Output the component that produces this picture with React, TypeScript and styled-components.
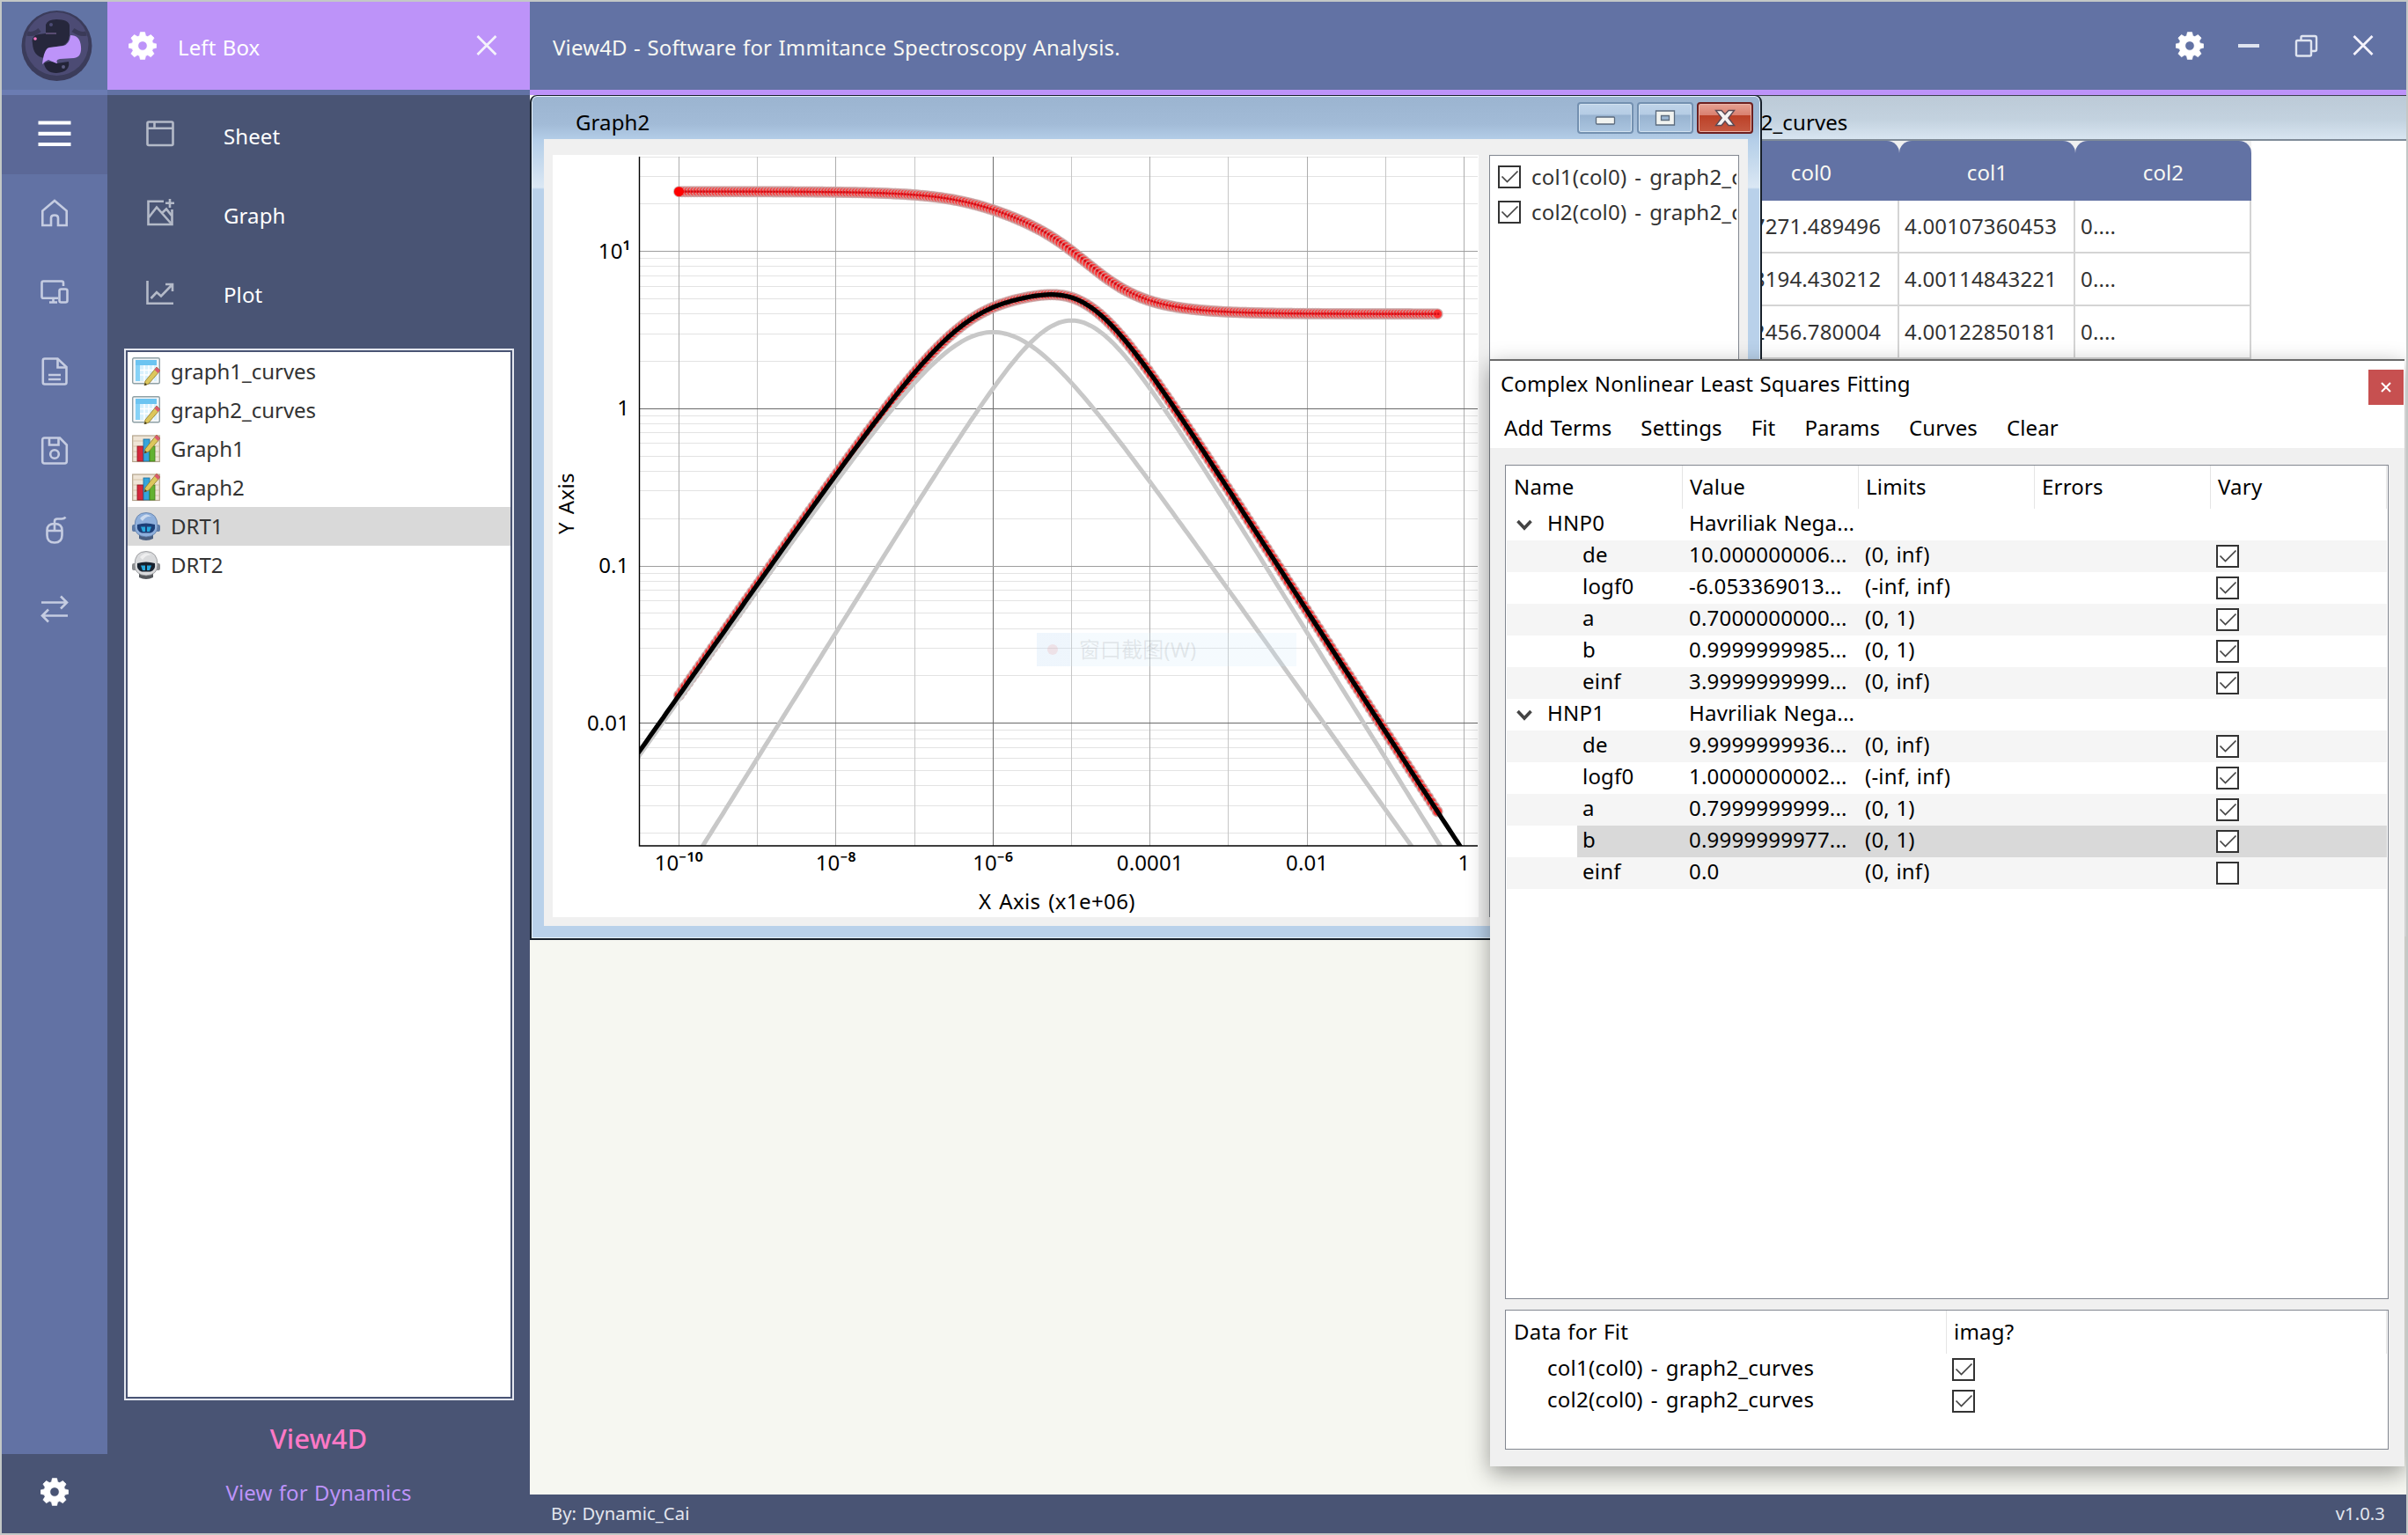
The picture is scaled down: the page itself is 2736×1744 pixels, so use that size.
import React from 'react';
import styled, { createGlobalStyle, css } from 'styled-components';

const font = `"Noto Sans", "Noto Sans CJK SC", "Open Sans", sans-serif`;

const Global = createGlobalStyle`
  * { box-sizing: border-box; }
  body { margin: 0; background: #495474; font-family: ${font}; font-size: 24px; line-height: 32px; letter-spacing: 0.1px; word-spacing: 1px; color: #000; }
  svg { display: block; flex: none; }
`;

/* ---------- shell ---------- */

const Shell = styled.div`
  width: 2736px;
  height: 1744px;
  display: flex;
  overflow: hidden;
  border: 2px solid #c3c8c6;
  white-space: nowrap;
`;

const Rail = styled.nav`
  width: 120px;
  flex: none;
  display: flex;
  flex-direction: column;
  background: #6272a4;
`;

const LogoCell = styled.div`
  height: 106px;
  display: flex;
  padding: 10px 0 0 22px;
  background: #6274a5;
  border-bottom: 6px solid #6b7cb2;
`;

const RailButton = styled.div<{ $active?: boolean }>`
  height: 90px;
  display: flex;
  align-items: center;
  justify-content: center;
  padding-bottom: 2px;
  color: #c5cce1;
  background: ${(p) => (p.$active ? '#5b6897' : 'transparent')};
`;

const RailFooter = styled.div`
  margin-top: auto;
  height: 90px;
  display: flex;
  align-items: center;
  justify-content: center;
  padding-bottom: 4px;
  color: #fff;
  background: #495474;
`;

const LeftBox = styled.aside`
  width: 480px;
  flex: none;
  display: flex;
  flex-direction: column;
  background: #495474;
`;

const LeftHeader = styled.div`
  height: 106px;
  display: flex;
  align-items: center;
  padding: 0 37px 0 24px;
  background: #bd93f9;
  border-bottom: 6px solid #6272a4;
  color: #fff;
`;

const LeftTitle = styled.span`
  flex: 1;
  padding: 3px 0 0 24px;
`;

const LeftItem = styled.div`
  height: 90px;
  display: flex;
  align-items: center;
  padding: 0 0 3px 44px;
  gap: 56px;
  color: #b4bac8;
`;

const LeftItemLabel = styled.span`
  padding-top: 6px;
  color: #fff;
`;

const ListFrame = styled.div`
  margin: 18px 18px 0 19px;
  height: 1195px;
  border: 2px solid #e4e7ef;
  padding: 2px;
`;

const List = styled.div`
  height: 100%;
  background: #fff;
`;

const ListRow = styled.div<{ $selected?: boolean }>`
  height: 44px;
  display: flex;
  align-items: center;
  gap: 12px;
  padding-left: 5px;
  letter-spacing: 0;
  color: #333;
  background: ${(p) => (p.$selected ? '#d9d9d9' : 'transparent')};
`;

const Brand = styled.div`
  margin-top: 23px;
  text-align: center;
  font-size: 31px;
  line-height: 40px;
  font-weight: 500;
  color: #ff79c6;
`;

const Tagline = styled.div`
  margin-top: 26px;
  text-align: center;
  color: #bd93f9;
`;

const Main = styled.main`
  flex: 1;
  min-width: 0;
  display: flex;
  flex-direction: column;
`;

const TopBar = styled.header`
  height: 106px;
  flex: none;
  display: flex;
  align-items: center;
  padding: 0 37px 0 26px;
  background: #6272a4;
  border-bottom: 6px solid #bd93f9;
  color: #f8f8f2;
`;

const AppTitle = styled.span`
  flex: 1;
  padding-top: 3px;
  letter-spacing: 0.16px;
`;

const TopButtons = styled.div`
  display: flex;
  align-items: center;
  gap: 37px;
  color: #dfe4f0;
`;

const Footer = styled.footer`
  height: 44px;
  flex: none;
  display: flex;
  align-items: center;
  justify-content: space-between;
  padding: 0 24px 3px 24px;
  font-size: 20.2px;
  background: #495474;
  color: #e3e6ee;
`;

/* ---------- MDI area ---------- */

const Workspace = styled.section`
  position: relative;
  flex: 1;
  overflow: hidden;
  background: #f6f7f1;
`;

const SheetWindow = styled.div`
  position: absolute;
  left: 1130px;
  top: 0;
  width: 1020px;
  height: 956px;
  background: #fff;
  border-top: 1px solid #3b3f4c;
  padding-left: 226px;
`;

const SheetTitle = styled.div`
  height: 51px;
  margin-left: -226px;
  padding: 14px 0 0 201px;
  border-bottom: 2px solid #7f8b98;
  background: linear-gradient(#bccad7, #c3d2df 55%, #d8e5f1);
`;

const SheetHead = styled.div`
  display: flex;
  width: 600px;
  background: #f0f0f0;
`;

const SheetHeadCell = styled.div`
  width: 200px;
  flex: none;
  height: 68px;
  padding-top: 20px;
  text-align: center;
  color: #f8f8f2;
  background: #6272a4;
  border-radius: 14px 14px 0 0;
`;

const SheetRow = styled.div`
  display: flex;
`;

const SheetCell = styled.div`
  width: 200px;
  flex: none;
  height: 60px;
  padding: 13px 0 0 6px;
  letter-spacing: 0.15px;
  color: #333;
  border-right: 2px solid #d4d4d4;
  border-bottom: 2px solid #d4d4d4;
`;

const GraphWindow = styled.div`
  position: absolute;
  left: 0;
  top: 0;
  width: 1400px;
  height: 960px;
  border: 2px solid #17202b;
  border-top-width: 1px;
  border-radius: 8px 8px 0 0;
  box-shadow: inset 0 0 0 1px #e6f2fb;
  background: linear-gradient(#9bb4d0 0, #a2bbd7 32px, #b4cee8 50px, #c9dcee 80px, #dbe8f4 104px, #b9d1ea 106px);
  padding: 0 14px 14px;
  display: flex;
  flex-direction: column;
`;

const GraphTitle = styled.div`
  height: 49px;
  flex: none;
  display: flex;
  padding: 7px 0 0 36px;
  margin-right: -6px;
`;

const GraphName = styled.span`
  flex: 1;
  padding-top: 7px;
`;

const FrameButtons = styled.div`
  display: flex;
  gap: 4px;
`;

const FrameButton = styled.div<{ $close?: boolean }>`
  width: 64px;
  height: 36px;
  border: 2px solid ${(p) => (p.$close ? '#6d1f1f' : '#7390b0')};
  border-radius: 4px;
  box-shadow: inset 0 0 0 1px ${(p) => (p.$close ? '#eab5a9' : '#d3e2f0')};
  display: flex;
  align-items: center;
  justify-content: center;
  background: ${(p) =>
    p.$close
      ? 'linear-gradient(#e6a193 0, #d98070 40%, #bb4027 41%, #c65a42 100%)'
      : 'linear-gradient(#c0d4e9 0, #b5cce4 38%, #98b3d0 40%, #abc5e0 100%)'};
`;

const GraphBody = styled.div`
  flex: 1;
  display: flex;
  gap: 12px;
  padding: 18px 10px 10px;
  background: #f0f0f0;
`;

const PlotArea = styled.div`
  position: relative;
  width: 1052px;
  height: 866px;
  flex: none;
  background: #fff;
`;

const Ghost = styled.div`
  position: absolute;
  left: 550px;
  top: 543px;
  width: 295px;
  height: 38px;
  display: flex;
  align-items: center;
  gap: 24px;
  padding-left: 12px;
  color: rgba(120, 125, 130, 0.17);
  background: linear-gradient(90deg, rgba(190, 218, 245, 0.25) 38px, rgba(205, 232, 250, 0.2) 38px);
`;

const GhostDot = styled.i`
  width: 12px;
  height: 12px;
  border-radius: 50%;
  background: rgba(235, 150, 150, 0.2);
`;

const Legend = styled.div`
  flex: 1;
  min-width: 0;
  border: 1px solid #828790;
  background: #fff;
  padding: 4px 2px 0 9px;
`;

const LegendRow = styled.div`
  height: 40px;
  display: flex;
  align-items: center;
  gap: 12px;
  overflow: hidden;
  color: #333;
  letter-spacing: 0.2px;
  word-spacing: 2.5px;
`;

/* ---------- fit dialog ---------- */

const Dialog = styled.div`
  position: absolute;
  left: 1091px;
  top: 300px;
  width: 1039px;
  height: 1258px;
  border-top: 2px solid #6b6b6b;
  background: #f0f0f0;
  box-shadow: 0 8px 24px rgba(0, 0, 0, 0.38);
  display: flex;
  flex-direction: column;
`;

const DialogTitle = styled.div`
  height: 55px;
  flex: none;
  display: flex;
  justify-content: space-between;
  align-items: flex-start;
  padding: 10px 1px 0 12px;
  background: #fff;
`;

const DialogClose = styled.div`
  width: 40px;
  height: 40px;
  display: flex;
  align-items: center;
  justify-content: center;
  background: #c75050;
`;

const Menu = styled.div`
  height: 44px;
  flex: none;
  display: flex;
  gap: 33px;
  padding: 5px 0 0 16px;
  letter-spacing: 0.13px;
  background: #fff;
`;

const Tree = styled.div<{ $h: number }>`
  margin: 19px 18px 0 17px;
  height: ${(p) => p.$h}px;
  flex: none;
  border: 1px solid #828790;
  background: #fff;
  padding: 0 1px;
  letter-spacing: 0.2px;
  & + & { margin-top: 12px; }
`;

const TreeHead = styled.div`
  height: 49px;
  display: flex;
`;

const HeadCell = styled.div<{ $w: number }>`
  width: ${(p) => p.$w}px;
  flex: none;
  padding: 8px 0 0 8px;
  border-right: 1px solid #e5e5e5;
`;

const rowTone = { plain: '#fff', alt: '#f5f5f5', selected: '#d9d9d9' };

const TreeRow = styled.div<{ $tone: keyof typeof rowTone }>`
  height: 36px;
  display: flex;
  background: ${(p) => rowTone[p.$tone]};
`;

const Cell = styled.div<{ $w: number; $indent?: number; $mask?: boolean; $wide?: boolean }>`
  width: ${(p) => p.$w}px;
  flex: none;
  display: flex;
  align-items: center;
  padding: 0 0 4px ${(p) => p.$indent ?? 7}px;
  ${(p) => p.$mask && css`background: linear-gradient(90deg, #fff 80px, transparent 80px);`}
  ${(p) => p.$wide && css`letter-spacing: 0.25px; word-spacing: 2.5px;`}
`;

const Chevron = styled.span`
  width: 39px;
  padding: 5px 0 0 3px;
`;

const Box = styled.span<{ $drop?: number }>`
  width: 26px;
  height: 26px;
  flex: none;
  border: 2px solid #333;
  background: #fff;
  margin-top: ${(p) => p.$drop ?? 0}px;
`;

const CheckBox = ({ checked = true, drop }: { checked?: boolean; drop?: number }) => (
  <Box $drop={drop}>
    {checked && (
      <svg width="22" height="22" viewBox="0 0 22 22" fill="none" stroke="#444" strokeWidth="1.7">
        <path d="M2.5 10.5 L8.5 16.5 L20.5 4.5" />
      </svg>
    )}
  </Box>
);

/* ---------- icons ---------- */

const Line = ({ size = 32, sw = 2.6, children }: { size?: number; sw?: number; children: React.ReactNode }) => (
  <svg width={size} height={size} viewBox="0 0 32 32" fill="none" stroke="currentColor" strokeWidth={sw}>
    {children}
  </svg>
);

const Gear = () => (
  <svg width="32" height="32" viewBox="0 0 32 32" fill="#fff">
    <path
      fillRule="evenodd"
      d="M13.4 0.6h5.2l1 4.1 2.2 0.9 3.6-2.2 3.7 3.7-2.2 3.6 0.9 2.2 4 1v4.4l-4 1-0.9 2.2 2.2 3.6-3.7 3.7-3.6-2.2-2.2 0.9-1 4.1h-5.2l-1-4.1-2.2-0.9-3.6 2.2-3.7-3.7 2.2-3.6-0.9-2.2-4-1v-4.4l4-1 0.9-2.2-2.2-3.6 3.7-3.7 3.6 2.2 2.2-0.9zM16 10.8a5.2 5.2 0 1 0 0 10.4 5.2 5.2 0 0 0 0-10.4z"
      stroke="#fff"
      strokeWidth="0.6"
      strokeLinejoin="round"
    />
  </svg>
);

const Cross = () => (
  <svg width="24" height="24" viewBox="0 0 24 24" fill="none" stroke="#f4f2fb" strokeWidth="2.8">
    <path d="M1.5 1 L22.5 22 M22.5 1 L1.5 22" />
  </svg>
);

const Logo = () => (
  <svg width="82" height="82" viewBox="0 0 82 82">
    <circle cx="40.500" cy="40" r="40" fill="#3b3c5b" />
    <circle cx="40.500" cy="38" r="36" fill="#4c4b74" />
    <path d="M7 26 Q14 28 21 22 M59 22 Q67 28 74 26" stroke="#3a3a58" strokeWidth="5" fill="none" />
    <path d="M28 16 Q30 10 40 10 Q54 10 55 17 L55 28 Q54 38 46 40 L34 42 Q27 44 26 54 Q14 52 13 38 Q11 28 20 27 L28 26 Z" fill="#26273c" />
    <path d="M56 28 Q67 28 68 41 Q69 53 60 54 L44 55 Q38 56 42 61 L31 56 Q26 58 24 61 Q26 43 32 42 L48 40 Q55 38 56 28 Z" fill="#bd93f9" />
    <path d="M26 60 Q32 56 40 60 L54 58 Q56 70 40 71 Q28 71 26 60 Z" fill="#232438" />
    <circle cx="16" cy="32" r="1.800" fill="#ff79c6" />
    <circle cx="34" cy="16" r="2" fill="#4c4b74" />
    <path d="M28 26 H40" stroke="#6b5a85" strokeWidth="1.500" />
    <circle cx="48" cy="64" r="2" fill="#5c5c80" />
  </svg>
);

const Hamburger = () => (
  <svg width="38" height="32" viewBox="0 0 38 32" stroke="#fff" strokeWidth="4.2">
    <path d="M0.500 3.500 H37.500 M0.500 15.800 H37.500 M0.500 28 H37.500" />
  </svg>
);

const railIcons = [
  <path key="home" d="M2.300 30 V13.500 L16 2 L29.700 13.500 V30 H20 V21.500 Q20 18.500 16 18.500 Q12 18.500 12 21.500 V30 Z" />,
  <g key="devices">
    <path d="M26 9 V5.500 Q26 3.500 24 3.500 H3.300 Q1.500 3.500 1.500 5.500 V21 Q1.500 22.800 3.300 22.800 H20" />
    <path d="M10 27.500 H19 M14.500 23 V27" />
    <rect x="21.500" y="12.500" width="9" height="15" rx="2" />
  </g>,
  <g key="file">
    <path d="M2.800 3.500 Q2.800 1.500 4.800 1.500 H19.500 L29.500 11 V28.500 Q29.500 30.500 27.500 30.500 H4.800 Q2.800 30.500 2.800 28.500 Z" />
    <path d="M19.500 2 V11.500 H29 M9 20 H23 M9 25 H23" />
  </g>,
  <g key="save">
    <path d="M2.200 4 Q2.200 1.500 4.500 1.500 H22 L29.800 9.500 V28 Q29.800 30.500 27.500 30.500 H4.500 Q2.200 30.500 2.200 28 Z" />
    <path d="M10 2 V9.500 H20.500 V2" />
    <circle cx="16" cy="20" r="4.800" />
  </g>,
  <g key="mouse">
    <path d="M16 9 V6.500 Q16 3.500 19 3.500 H24 Q27 3.500 28.500 1.500 M7.500 16.500 Q7.500 9 16 9 Q24.500 9 24.500 16.500 V22 Q24.500 30.500 16 30.500 Q7.500 30.500 7.500 22 Z M7.500 17 H24.500 M16 9 V17" />
  </g>,
  <g key="arrows">
    <path d="M1 8.500 H30 M23 1.500 L30 8.500 L23 15.500 M31 23.500 H2 M9 16.500 L2 23.500 L9 30.500" />
  </g>,
];

const leftItems = [
  {
    label: 'Sheet',
    icon: (
      <g>
        <rect x="1.500" y="2.500" width="29" height="26.500" rx="1.500" />
        <path d="M1.500 9.800 H30.500 M9.500 2.500 V9.800" />
      </g>
    ),
  },
  {
    label: 'Graph',
    icon: (
      <g>
        <path d="M20 2.800 H2.500 V29 H29.500 V12 M27 0 V10 M22 4.800 H32" />
        <path d="M3 21 L12 9.500 L28.500 28 M18 16 L23 11.500 L29 19" />
      </g>
    ),
  },
  {
    label: 'Plot',
    icon: (
      <g>
        <path d="M1.500 3 V28.700 H31" />
        <path d="M5.500 23 L12 16 L17 20.500 L29.500 7.500 M22 7 H30 V15" />
      </g>
    ),
  },
];

const Pencil = ({ dx = 0, dy = 0 }: { dx?: number; dy?: number }) => (
  <g transform={`translate(${dx} ${dy})`}>
    <path d="M28 0 L32 4 L19 19 L14 21 L15 16 Z" fill="#dcc75c" stroke="#8f7a2c" strokeWidth="0.800" />
    <path d="M28 0 L32 4 L29.500 7 L25.500 3 Z" fill="#d85a70" />
    <path d="M15 18 L14 21 L17 20 Z" fill="#3a3320" />
  </g>
);

const TableIcon = () => (
  <svg width="32" height="32" viewBox="0 0 32 32">
    <rect x="0.700" y="0.700" width="30.600" height="29" rx="1.500" fill="#f3f6f8" stroke="#8fa0a5" strokeWidth="1.400" />
    <rect x="4" y="3" width="24" height="24" fill="#d9f1fd" />
    <rect x="4" y="3" width="24" height="6" fill="#6cc4f1" />
    <rect x="4" y="9" width="5" height="18" fill="#86d2f7" />
    <path d="M9 14.500 H28 M9 20 H28 M14 9 V27 M19 9 V27 M24 9 V27" stroke="#fff" strokeWidth="1.500" />
    <Pencil dy={11} />
  </svg>
);

const ChartIcon = () => (
  <svg width="32" height="32" viewBox="0 0 32 32">
    <rect x="0.700" y="1" width="30.600" height="29.500" fill="#efe5d6" stroke="#b3a48c" strokeWidth="1.200" />
    <path d="M1 7 H31 M1 13 H31 M1 19 H31 M1 25 H31" stroke="#d6c4aa" strokeWidth="1" />
    <rect x="6" y="13" width="7" height="17" fill="#d5283c" stroke="#8d1420" strokeWidth="0.800" />
    <rect x="13" y="5" width="7" height="25" fill="#35a4dc" stroke="#1b6c9c" strokeWidth="0.800" />
    <rect x="20" y="13" width="6" height="17" fill="#63b22f" stroke="#3c7a17" strokeWidth="0.800" />
    <Pencil />
  </svg>
);

const RobotIcon = ({ tint }: { tint: boolean }) => {
  const shell = tint ? '#8fb0dc' : '#d9dadc';
  const rim = tint ? '#5d7ba6' : '#8b8d90';
  return (
    <svg width="32" height="32" viewBox="0 0 32 32">
      <path d="M8 24 H24 V30 Q16 34 8 30 Z" fill={tint ? '#4a5f80' : '#55585c'} />
      <rect x="0" y="14" width="5" height="8" rx="2" fill={rim} />
      <rect x="27" y="14" width="5" height="8" rx="2" fill={rim} />
      <path d="M3 16 Q3 0.500 16 0.500 Q29 0.500 29 16 Q29 27 16 28 Q3 27 3 16 Z" fill={shell} stroke={rim} strokeWidth="0.800" />
      <path d="M9 7 Q16 -1 22 5 Q16 4 12 10 Z" fill="#fff" opacity="0.550" />
      <path d="M6 14 Q16 11 26 14 Q27 22 21 23.500 H11 Q5 22 6 14 Z" fill={tint ? '#1d3f77' : '#17212e'} />
      <path d="M10 16.500 H15 V22 H12 Z M17 16.500 H22 L20 22 H17 Z" fill="#28a8dc" />
    </svg>
  );
};

const listItems = [
  { name: 'graph1_curves', kind: 'table' },
  { name: 'graph2_curves', kind: 'table' },
  { name: 'Graph1', kind: 'chart' },
  { name: 'Graph2', kind: 'chart' },
  { name: 'DRT1', kind: 'robot', selected: true },
  { name: 'DRT2', kind: 'robot' },
];

const ItemIcon = ({ kind, selected }: { kind: string; selected?: boolean }) =>
  kind === 'table' ? <TableIcon /> : kind === 'chart' ? <ChartIcon /> : <RobotIcon tint={!!selected} />;

/* ---------- chart ---------- */

const LEFT = 98.5;
const RIGHT = 1051;
const BOTTOM = 785;
const px = (logf: number) => 143.5 + 89.2 * (logf + 10);
const py = (logv: number) => 288.3 - 178.7 * logv;

/* Cole-Cole relaxation: strength 10, exponent a, centre frequency 10^c. */
const relax = (logf: number, a: number, c: number) => {
  const m = Math.pow(10, a * (logf - c));
  const re = 1 + m * Math.cos((a * Math.PI) / 2);
  const im = m * Math.sin((a * Math.PI) / 2);
  const d = re * re + im * im;
  return { real: (10 * re) / d, imag: (10 * im) / d };
};

const term0 = (x: number) => relax(x, 0.7, -6);
const term1 = (x: number) => relax(x, 0.8, -5);
const sumImag = (x: number) => term0(x).imag + term1(x).imag;
const sumReal = (x: number) => 4 + term0(x).real + term1(x).real;

const curve = (f: (x: number) => number) => {
  const pts: string[] = [];
  for (let x = -10.8; x <= 0.4; x += 0.04) pts.push(`${px(x).toFixed(1)},${py(Math.log10(f(x))).toFixed(1)}`);
  return pts.join(' ');
};

const samples = Array.from({ length: 250 }, (_, i) => -10 + (i * 9.6602) / 249);

const xTicks: [number, string, string][] = [
  [-10, '10', '⁻¹⁰'],
  [-8, '10', '⁻⁸'],
  [-6, '10', '⁻⁶'],
  [-4, '0.0001', ''],
  [-2, '0.01', ''],
  [0, '1', ''],
];
const yTicks: [number, string, string, number][] = [
  [1, '10', '¹', 89],
  [0, '1', '', 87],
  [-1, '0.1', '', 86.5],
  [-2, '0.01', '', 87],
];

const minors: number[] = [];
for (let d = -3; d <= 1; d++)
  for (let k = 2; k <= 9; k++) {
    const v = d + Math.log10(k);
    if (v > -2.78 && v < 1.61) minors.push(v);
  }

const ChartText = styled.text`
  font-family: ${font};
  font-size: 24px;
  fill: #000;
`;

const AxisTitle = styled(ChartText)`
  letter-spacing: 0.4px;
  word-spacing: 2px;
`;

const Exponent = styled.tspan`
  font-size: 25px;
  font-weight: 500;
  letter-spacing: 0.5px;
`;

const Marks = ({ f }: { f: (x: number) => number }) => (
  <g>
    {samples.map((x) => (
      <circle key={x} cx={px(x)} cy={py(Math.log10(f(x)))} r="5.7" fill="#ff3030" stroke="#c8a8a8" strokeWidth="1.700" strokeOpacity="0.8" />
    ))}
    {samples.map((x) => (
      <circle key={x} cx={px(x) + 1} cy={py(Math.log10(f(x)))} r="1.4" fill="#d00a14" />
    ))}
  </g>
);

const Chart = () => (
  <svg width="1052" height="866" viewBox="0 0 1052 866">
    <defs>
      <clipPath id="plot">
        <rect x={LEFT} y="0" width={RIGHT - LEFT} height={BOTTOM} />
      </clipPath>
    </defs>
    <g shapeRendering="crispEdges">
      {minors.map((v) => (
        <rect key={v} x={LEFT} y={Math.round(py(v) - 0.5)} width={RIGHT - LEFT} height="1" fill="#e3e3e3" />
      ))}
      {Array.from({ length: 11 }, (_, i) => i - 10).map((d) => (
        <rect key={d} x={Math.floor(px(d))} y="2" width="1" height={BOTTOM - 2} fill={d === -6 ? '#6e6e6e' : d % 2 ? '#c6c6c6' : '#adadad'} />
      ))}
      {[1, 0, -1, -2].map((d) => (
        <rect key={d} x={LEFT} y={Math.floor(py(d))} width={RIGHT - LEFT} height="1" fill={d % 2 ? '#9e9e9e' : '#6a6a6a'} />
      ))}
    </g>
    <g clipPath="url(#plot)" fill="none">
      <Marks f={sumReal} />
      <circle cx={px(-10)} cy={py(Math.log10(sumReal(-10)))} r="5.500" fill="#ff0000" />
      <Marks f={sumImag} />
      <polyline points={curve((x) => term0(x).imag)} stroke="#c8c8c8" strokeWidth="5" />
      <polyline points={curve((x) => term1(x).imag)} stroke="#c8c8c8" strokeWidth="5" />
      <polyline points={curve(sumImag)} stroke="#000" strokeWidth="5.200" />
    </g>
    <path d={`M${LEFT} 2 V${BOTTOM} H${RIGHT}`} fill="none" stroke="#000" strokeWidth="1.400" />
    {xTicks.map(([v, t, e]) => (
      <ChartText key={v} x={px(v)} y="813" textAnchor="middle">{t}{e && <Exponent>{e}</Exponent>}</ChartText>
    ))}
    {yTicks.map(([v, t, e, x]) => (
      <ChartText key={v} x={x} y={py(v) + 8} textAnchor="end">{t}{e && <Exponent>{e}</Exponent>}</ChartText>
    ))}
    <AxisTitle x="573" y="857" textAnchor="middle">X Axis (x1e+06)</AxisTitle>
    <AxisTitle x="0" y="0" transform="translate(24 396) rotate(-90)" textAnchor="middle">Y Axis</AxisTitle>
  </svg>
);

/* ---------- data ---------- */

type Param = { name: string; value: string; limits?: string; vary?: boolean; selected?: boolean };

const params: Param[] = [
  { name: 'HNP0', value: 'Havriliak Nega...' },
  { name: 'de', value: '10.000000006...', limits: '(0, inf)', vary: true },
  { name: 'logf0', value: '-6.053369013...', limits: '(-inf, inf)', vary: true },
  { name: 'a', value: '0.7000000000...', limits: '(0, 1)', vary: true },
  { name: 'b', value: '0.9999999985...', limits: '(0, 1)', vary: true },
  { name: 'einf', value: '3.9999999999...', limits: '(0, inf)', vary: true },
  { name: 'HNP1', value: 'Havriliak Nega...' },
  { name: 'de', value: '9.9999999936...', limits: '(0, inf)', vary: true },
  { name: 'logf0', value: '1.0000000002...', limits: '(-inf, inf)', vary: true },
  { name: 'a', value: '0.7999999999...', limits: '(0, 1)', vary: true },
  { name: 'b', value: '0.9999999977...', limits: '(0, 1)', vary: true, selected: true },
  { name: 'einf', value: '0.0', limits: '(0, inf)', vary: false },
];

const sheet = [
  ['457271.489496', '4.00107360453', '0....'],
  ['418194.430212', '4.00114843221', '0....'],
  ['382456.780004', '4.00122850181', '0....'],
  ['', '', ''],
];

const menu = ['Add Terms', 'Settings', 'Fit', 'Params', 'Curves', 'Clear'];

export default function App() {
  return (
    <>
      <Global />
      <Shell>
        <Rail>
          <LogoCell><Logo /></LogoCell>
          <RailButton $active><Hamburger /></RailButton>
          {railIcons.map((icon) => (
            <RailButton key={icon.key}><Line>{icon}</Line></RailButton>
          ))}
          <RailFooter><Gear /></RailFooter>
        </Rail>

        <LeftBox>
          <LeftHeader>
            <Gear />
            <LeftTitle>Left Box</LeftTitle>
            <Cross />
          </LeftHeader>
          {leftItems.map((item) => (
            <LeftItem key={item.label}>
              <Line>{item.icon}</Line>
              <LeftItemLabel>{item.label}</LeftItemLabel>
            </LeftItem>
          ))}
          <ListFrame>
            <List>
              {listItems.map((item) => (
                <ListRow key={item.name} $selected={item.selected}>
                  <ItemIcon kind={item.kind} selected={item.selected} />
                  {item.name}
                </ListRow>
              ))}
            </List>
          </ListFrame>
          <Brand>View4D</Brand>
          <Tagline>View for Dynamics</Tagline>
        </LeftBox>

        <Main>
          <TopBar>
            <AppTitle>View4D - Software for Immitance Spectroscopy Analysis.</AppTitle>
            <TopButtons>
              <Gear />
              <svg width="28" height="24" viewBox="0 0 28 24"><rect x="2" y="10" width="24" height="4" fill="currentColor" /></svg>
              <svg width="30" height="26" viewBox="0 0 30 26" fill="none" stroke="currentColor" strokeWidth="2.400">
                <rect x="3" y="7" width="17" height="17.500" rx="1.500" />
                <path d="M8.500 6.500 V3.500 Q8.500 2 10 2 H24 Q26 2 26 4 V17 Q26 19 24 19 H20.500" />
              </svg>
              <Cross />
            </TopButtons>
          </TopBar>

          <Workspace>
            <SheetWindow>
              <SheetTitle>graph2_curves</SheetTitle>
              <SheetHead>
                <SheetHeadCell>col0</SheetHeadCell>
                <SheetHeadCell>col1</SheetHeadCell>
                <SheetHeadCell>col2</SheetHeadCell>
              </SheetHead>
              {sheet.map((row, i) => (
                <SheetRow key={i}>
                  {row.map((v, j) => <SheetCell key={j}>{v}</SheetCell>)}
                </SheetRow>
              ))}
            </SheetWindow>

            <GraphWindow>
              <GraphTitle>
                <GraphName>Graph2</GraphName>
                <FrameButtons>
                  <FrameButton>
                    <svg width="24" height="24" viewBox="0 0 24 24"><rect x="1.500" y="11" width="21" height="8" rx="1" fill="#f1f3f0" stroke="#5b6b7d" strokeWidth="1.300" /></svg>
                  </FrameButton>
                  <FrameButton>
                    <svg width="24" height="24" viewBox="0 0 24 24">
                      <path d="M1.500 4 H22.500 V20 H1.500 Z M7.500 9.500 V14.500 H16.500 V9.500 Z" fillRule="evenodd" fill="#f1f3f0" stroke="#5b6b7d" strokeWidth="1.300" />
                    </svg>
                  </FrameButton>
                  <FrameButton $close>
                    <svg width="24" height="24" viewBox="0 0 24 24">
                      <path d="M1.500 3.500 H8 L12 8 L16 3.500 H22.500 L15.800 12 L22.500 20.500 H16 L12 15.500 L8 20.500 H1.500 L8.200 12 Z" fill="#f4f2f1" stroke="#5a4a55" strokeWidth="1.400" />
                    </svg>
                  </FrameButton>
                </FrameButtons>
              </GraphTitle>
              <GraphBody>
                <PlotArea>
                  <Chart />
                  <Ghost><GhostDot />窗口截图(W)</Ghost>
                </PlotArea>
                <Legend>
                  <LegendRow><CheckBox />col1(col0) - graph2_curves</LegendRow>
                  <LegendRow><CheckBox />col2(col0) - graph2_curves</LegendRow>
                </Legend>
              </GraphBody>
            </GraphWindow>

            <Dialog>
              <DialogTitle>
                Complex Nonlinear Least Squares Fitting
                <DialogClose>
                  <svg width="12" height="12" viewBox="0 0 12 12" stroke="#fff" strokeWidth="2"><path d="M1 1 L11 11 M11 1 L1 11" /></svg>
                </DialogClose>
              </DialogTitle>
              <Menu>{menu.map((m) => <span key={m}>{m}</span>)}</Menu>
              <Tree $h={948}>
                <TreeHead>
                  {['Name', 'Value', 'Limits', 'Errors', 'Vary'].map((h) => <HeadCell key={h} $w={200}>{h}</HeadCell>)}
                </TreeHead>
                {params.map((p, i) => (
                  <TreeRow key={i} $tone={p.selected ? 'selected' : i % 2 ? 'alt' : 'plain'}>
                    {p.limits ? (
                      <Cell $w={200} $indent={86} $mask={p.selected}>{p.name}</Cell>
                    ) : (
                      <Cell $w={200}>
                        <Chevron>
                          <svg width="20" height="14" viewBox="0 0 20 14" fill="none" stroke="#444" strokeWidth="3.600"><path d="M2.500 2 L10 10 L17.500 2" /></svg>
                        </Chevron>
                        {p.name}
                      </Cell>
                    )}
                    <Cell $w={200}>{p.value}</Cell>
                    <Cell $w={200}>{p.limits}</Cell>
                    <Cell $w={200} />
                    <Cell $w={200} $indent={6}>{p.vary !== undefined && <CheckBox checked={p.vary} drop={4} />}</Cell>
                  </TreeRow>
                ))}
              </Tree>
              <Tree $h={159}>
                <TreeHead>
                  <HeadCell $w={500}>Data for Fit</HeadCell>
                  <HeadCell $w={500}>imag?</HeadCell>
                </TreeHead>
                {['col1(col0) - graph2_curves', 'col2(col0) - graph2_curves'].map((name) => (
                  <TreeRow key={name} $tone="plain">
                    <Cell $w={500} $indent={46} $wide>{name}</Cell>
                    <Cell $w={500} $indent={6}><CheckBox drop={4} /></Cell>
                  </TreeRow>
                ))}
              </Tree>
            </Dialog>
          </Workspace>

          <Footer>
            <span>By: Dynamic_Cai</span>
            <span>v1.0.3</span>
          </Footer>
        </Main>
      </Shell>
    </>
  );
}
